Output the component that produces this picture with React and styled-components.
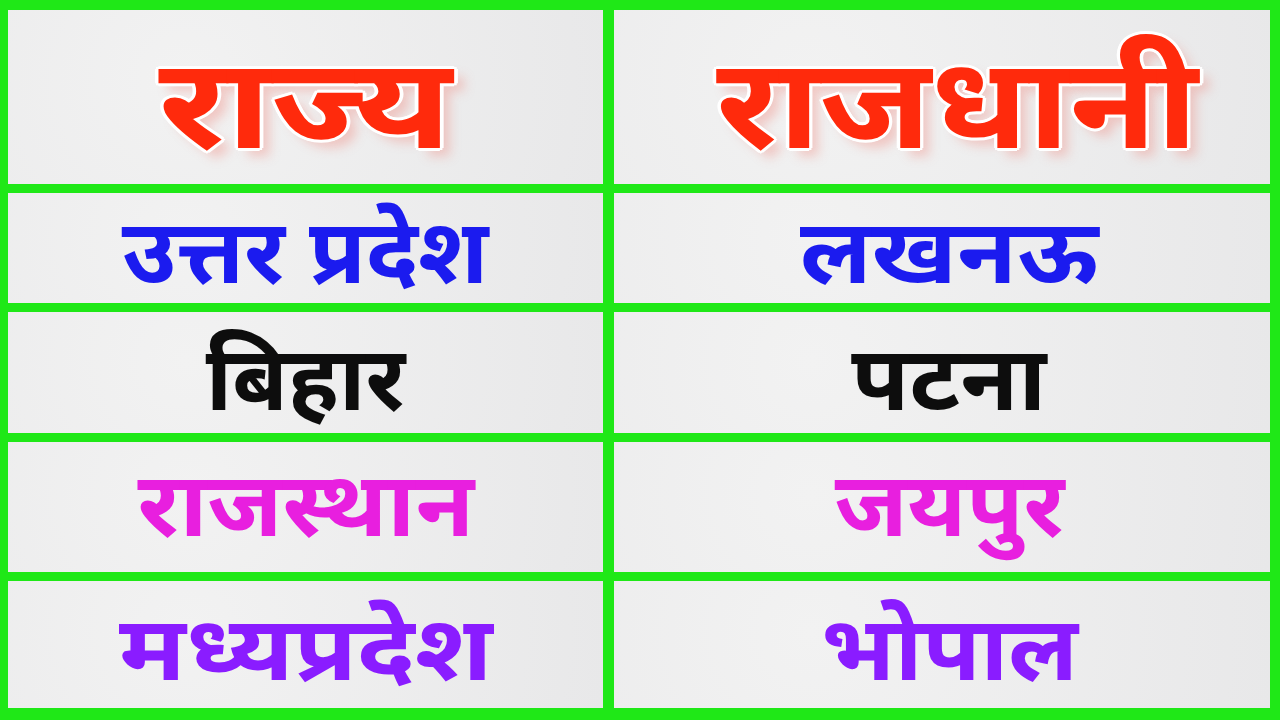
import React from 'react';
import styled, { createGlobalStyle } from 'styled-components';

const GlobalStyle = createGlobalStyle`
  html, body {
    margin: 0;
    padding: 0;
    width: 1280px;
    height: 720px;
    overflow: hidden;
    background: #1fe817;
  }
`;

// green frame, the gaps draw the grid lines
const Board = styled.div`
  box-sizing: border-box;
  width: 1280px;
  height: 720px;
  padding: 10px 10px 12px 8px;
  background: #1fe817;
  display: grid;
  grid-template-columns: 595px 1fr;
  grid-template-rows: 174px 110px 121px 130px 127px;
  gap: 9px 11px;
  font-family: "Noto Sans Devanagari", "Noto Sans", "Lohit Devanagari", sans-serif;
`;

const Cell = styled.div`
  box-sizing: border-box;
  display: flex;
  align-items: center;
  justify-content: center;
  padding-left: ${(p) => (p.$right ? 14 : 0)}px;
  background: radial-gradient(circle at 30% 40%, #f2f2f2 0%, #e8e8e9 100%);
`;

const Title = styled.span`
  display: inline-block;
  font-size: 126px;
  font-weight: 700;
  line-height: 0.75;
  color: #ff2a0c;
  transform: translate(${(p) => p.$nudge || 0}px, 20px) scaleX(${(p) => p.$stretch || 1.15});
  text-shadow:
    3px 0 0 #fff, -3px 0 0 #fff, 0 3px 0 #fff, 0 -3px 0 #fff,
    2px 2px 0 #fff, -2px 2px 0 #fff, 2px -2px 0 #fff, -2px -2px 0 #fff,
    8px 8px 10px rgba(240, 120, 110, 0.35);
`;

const Word = styled.span`
  display: inline-block;
  font-size: 90px;
  font-weight: 700;
  line-height: 0.75;
  color: ${(p) => p.$color};
  transform: translateY(${(p) => p.$drop}px) scaleX(${(p) => p.$stretch || 1.05});
`;

const rows = [
  { state: 'उत्तर प्रदेश', capital: 'लखनऊ', color: '#1b1bef', drop: 14, s1: 1.03, s2: 1.08 },
  { state: 'बिहार', capital: 'पटना', color: '#0d0d0d', drop: 16, s1: 1.0, s2: 1.05 },
  { state: 'राजस्थान', capital: 'जयपुर', color: '#e81fdf', drop: 8, s1: 1.06, s2: 1.03 },
  { state: 'मध्यप्रदेश', capital: 'भोपाल', color: '#8a1cff', drop: 14, s1: 1.14, s2: 1.05 },
];

const App = () => (
  <>
    <GlobalStyle />
    <Board>
      <Cell>
        <Title $stretch={1.22}>राज्य</Title>
      </Cell>
      <Cell $right>
        <Title $stretch={1.12} $nudge={8}>राजधानी</Title>
      </Cell>
      {rows.map((r) => (
        <React.Fragment key={r.state}>
          <Cell>
            <Word $color={r.color} $drop={r.drop} $stretch={r.s1}>{r.state}</Word>
          </Cell>
          <Cell $right>
            <Word $color={r.color} $drop={r.drop} $stretch={r.s2}>{r.capital}</Word>
          </Cell>
        </React.Fragment>
      ))}
    </Board>
  </>
);

export default App;
